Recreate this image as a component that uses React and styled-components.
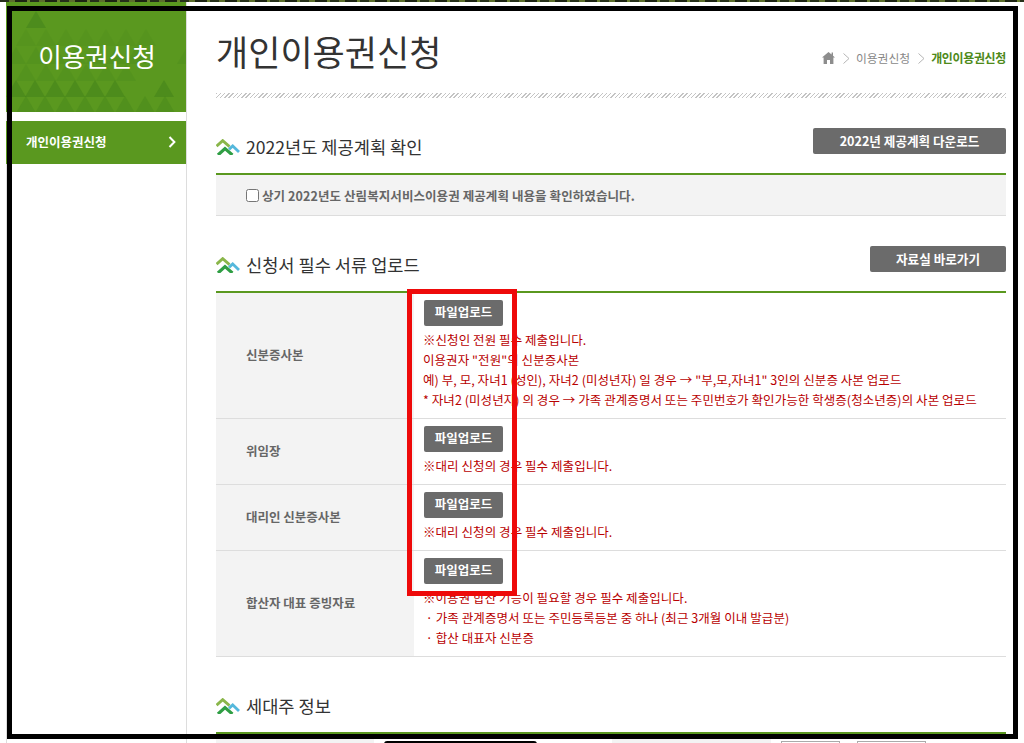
import React from "react";
import styled, { createGlobalStyle } from "styled-components";

const Global = createGlobalStyle`
  html, body { margin: 0; padding: 0; background: #fff; overflow: hidden; }
  #root { width: 1024px; height: 743px; overflow: hidden; }
  * { box-sizing: border-box; }
`;
const Page = styled.div`
  position: relative; width: 1024px; height: 743px; overflow: hidden; background: #fff;
  font-family: "Noto Sans CJK KR", "Noto Sans", sans-serif;
`;
const TopStrip = styled.div`
  height: 2px;
  background: repeating-linear-gradient(90deg, #26301a 0 9px, #5c6f2c 9px 15px, #1d2412 15px 27px, #6a8030 27px 30px);
`;
const Shell = styled.div`display: flex; height: 741px; padding-left: 6px;`;
const Sidebar = styled.aside`
  width: 181px; flex: none; border-right: 1px solid #ddd; height: 100%; box-shadow: inset 1px 0 #ddd;
`;
const SideHead = styled.div`
  height: 110px; background: #5a981f; color: #fff; display: flex; align-items: center; justify-content: center;
  font-size: 25.6px; padding: 0 0 4px 2px; position: relative; overflow: hidden;
  span { position: relative; }
  svg { position: absolute; left: 0; top: 0; }
`;
const SideItem = styled.div`
  margin-top: 9px; height: 43px; background: #5a981f; color: #fff; font-size: 12.5px; font-weight: 700;
  display: flex; align-items: center; justify-content: space-between; padding: 0 10px 2px 20px;
`;
const Main = styled.main`flex: 1; padding: 0 18px 0 29px; min-width: 0;`;
const TitleRow = styled.div`
  height: 91px; display: flex; justify-content: space-between; align-items: flex-start; padding-top: 24px;
`;
const Title = styled.h1`
  margin: 0; font-size: 35px; font-weight: 400; color: #333; line-height: 50px;
`;
const Crumbs = styled.div`
  display: flex; align-items: center; margin-top: 23px; font-size: 11.8px; color: #888; line-height: 18px;
  b { color: #4e8a1a; font-weight: 700; letter-spacing: -0.35px; font-size: 12px; }
  svg { margin-right: 8px; }
  span { margin-right: 8px; }
  svg + span, svg + b { margin-left: -2px; }
`;
const Divider = styled.div`
  height: 5px;
  background: repeating-linear-gradient(135deg, #c4c4c4 0 1px, #fff 1px 3px);
`;
const SectionHead = styled.div`
  display: flex; justify-content: space-between; align-items: flex-start;
  height: ${p => p.$h}px; margin-top: ${p => p.$mt}px;
`;
const HeadLabel = styled.h2`
  margin: 0; display: flex; align-items: center; gap: 6px; font-size: 17.6px; font-weight: 400; color: #333;
  line-height: 24px; padding-top: ${p => p.$pt}px;
`;
const DarkBtn = styled.div`
  background: #6b6b6b; color: #fff; border-radius: 2px; font-weight: 700; font-size: 12.6px;
  display: flex; align-items: center; justify-content: center; width: ${p => p.$w}px; height: 26px;
  flex: none; padding-bottom: 2px;
`;
const ConfirmBox = styled.div`
  border-top: 2px solid #5a981f; border-bottom: 1px solid #ddd; background: #f3f3f3; height: 43px;
  display: flex; align-items: center; padding-left: 30px; gap: 3px; font-size: 12.5px; font-weight: 700; color: #666;
  letter-spacing: 0.08px;
`;
const Check = styled.span`
  width: 13px; height: 13px; border: 1px solid #767676; border-radius: 2.5px; background: #fff; flex: none;
`;
const Table = styled.div`border-top: 2px solid #5a981f;`;
const Row = styled.div`
  display: grid; grid-template-columns: 198px 1fr; border-bottom: 1px solid #ddd; height: ${p => p.$h}px;
`;
const Th = styled.div`
  background: #f3f3f3; color: #666; font-size: 12.5px; font-weight: 700; display: flex; align-items: center;
  padding: 0 0 2px 30px;
`;
const Td = styled.div`padding: 7px 0 0 10px;`;
const Upload = styled.div`
  width: 79px; height: 26px; background: #6b6b6b; color: #fff; border-radius: 2px; font-size: 12.5px; font-weight: 700;
  display: flex; align-items: center; justify-content: center; margin-bottom: 4px; padding-bottom: 3px;
`;
const Note = styled.div`
  color: #b80000; font-size: 12.5px; line-height: 20px; white-space: nowrap; margin-left: -1px; letter-spacing: 0.06px;
`;
const NextRow = styled.div`display: flex; height: 20px;`;
const NextTh = styled.div`background: #f3f3f3; flex: none; width: ${p => p.$w}px;`;
const NextCell = styled.div`
  flex: none; width: ${p => p.$w}px; display: flex; gap: 17px; padding: 7px 0 0 10px;
`;
const Pill = styled.div`width: 153px; height: 20px; background: #000; border-radius: 3px;`;
const Field = styled.div`width: ${p => p.$w}px; height: 20px; border: 1px solid #aaa;`;
const Frame = styled.div`
  position: absolute; left: 7px; top: 6px; width: 1011px; height: 733px; border: 5px solid #000; pointer-events: none;
`;
const RedBox = styled.div`
  position: absolute; left: 407px; top: 289px; width: 110px; height: 307px; border: 5px solid #ee0a0a; pointer-events: none;
`;

const Logo = () => (
  <svg width="24" height="16" viewBox="0 0 24 16">
    <path d="M0.6 7.2 L6.7 1.6 L13.5 7.6" fill="none" stroke="#8ab64a" strokeWidth="2.8" />
    <path d="M13 10.4 L16.7 7 L23 13" fill="none" stroke="#55b8dc" strokeWidth="2.8" />
    <path d="M2 16 L9 9.6 L16.4 16" fill="none" stroke="#2f9e44" strokeWidth="3.2" />
  </svg>
);
const Home = () => (
  <svg width="13" height="12" viewBox="0 0 13 12"><path d="M6.5 0 L9.6 2.6 L9.6 0.6 L11 0.6 L11 3.8 L13 5.6 L11.4 5.6 L11.4 12 L8 12 L8 8 L5 8 L5 12 L1.6 12 L1.6 5.6 L0 5.6 Z" fill="#8d8d8d"/></svg>
);
const Sep = () => (
  <svg width="7" height="11" viewBox="0 0 7 11"><path d="M0.5 0.5 L6 5.5 L0.5 10.5" fill="none" stroke="#b5b5b5" strokeWidth="1"/></svg>
);
const Chev = () => (
  <svg width="8" height="12" viewBox="0 0 8 12"><path d="M1.5 1 L6.4 6 L1.5 11" fill="none" stroke="#fff" strokeWidth="2"/></svg>
);
const row = (y, xs, o) => xs.map(x => [x, y, o]);
const tri = [
  ...row(9, [20], .45),
  ...row(27, [10, 30, 50, 70, 90, 110, 130], .14),
  ...row(45, [0, 20, 40, 60, 80, 100, 120, 171], .18),
  ...row(62, [10, 30, 50, 70, 90, 110], .18),
  ...row(78, [0, 19, 39, 59, 79, 99, 148], .5),
  ...row(94, [10, 29, 49, 69, 89, 109, 129, 149], .32),
];
const Trees = () => (
  <svg width="180" height="110" viewBox="0 0 180 110">
    {tri.map(([x, y, o], i) => (<path key={i} d={`M${x} ${y + 17} L${x + 10} ${y} L${x + 20} ${y + 17} Z`} fill="#3f7f1a" opacity={o} />))}
  </svg>
);

export default function App() {
  return (
    <Page>
      <Global />
      <TopStrip />
      <Shell>
        <Sidebar>
          <SideHead><Trees /><span>이용권신청</span></SideHead>
          <SideItem>개인이용권신청<Chev /></SideItem>
        </Sidebar>
        <Main>
          <TitleRow>
            <Title>개인이용권신청</Title>
            <Crumbs><Home /><Sep /><span>이용권신청</span><Sep /><b>개인이용권신청</b></Crumbs>
          </TitleRow>
          <Divider />
          <SectionHead $mt={30} $h={45}>
            <HeadLabel $pt={7}><Logo />2022년도 제공계획 확인</HeadLabel>
            <DarkBtn $w={193}>2022년 제공계획 다운로드</DarkBtn>
          </SectionHead>
          <ConfirmBox><Check />상기 2022년도 산림복지서비스이용권 제공계획 내용을 확인하였습니다.</ConfirmBox>
          <SectionHead $mt={30} $h={45}>
            <HeadLabel $pt={7}><Logo />신청서 필수 서류 업로드</HeadLabel>
            <DarkBtn $w={136}>자료실 바로가기</DarkBtn>
          </SectionHead>
          <Table>
            <Row $h={126}>
              <Th>신분증사본</Th>
              <Td>
                <Upload>파일업로드</Upload>
                <Note>※신청인 전원 필수 제출입니다.</Note>
                <Note>이용권자 "전원"의 신분증사본</Note>
                <Note>예) 부, 모, 자녀1 (성인), 자녀2 (미성년자) 일 경우 → "부,모,자녀1" 3인의 신분증 사본 업로드</Note>
                <Note>* 자녀2 (미성년자) 의 경우 → 가족 관계증명서 또는 주민번호가 확인가능한 학생증(청소년증)의 사본 업로드</Note>
              </Td>
            </Row>
            <Row $h={66}>
              <Th>위임장</Th>
              <Td><Upload>파일업로드</Upload><Note>※대리 신청의 경우 필수 제출입니다.</Note></Td>
            </Row>
            <Row $h={66}>
              <Th>대리인 신분증사본</Th>
              <Td><Upload>파일업로드</Upload><Note>※대리 신청의 경우 필수 제출입니다.</Note></Td>
            </Row>
            <Row $h={106}>
              <Th>합산자 대표 증빙자료</Th>
              <Td>
                <Upload>파일업로드</Upload>
                <Note>※이용권 합산 기능이 필요할 경우 필수 제출입니다.</Note>
                <Note>&nbsp;· 가족 관계증명서 또는 주민등록등본 중 하나 (최근 3개월 이내 발급분)</Note>
                <Note>&nbsp;· 합산 대표자 신분증</Note>
              </Td>
            </Row>
          </Table>
          <SectionHead $mt={37} $h={38}>
            <HeadLabel $pt={0}><Logo />세대주 정보</HeadLabel>
          </SectionHead>
          <Table>
            <NextRow>
              <NextTh $w={158} />
              <NextCell $w={238}><Pill /></NextCell>
              <NextTh $w={159} />
              <NextCell $w={235}><Field $w={59} /><Field $w={69} /></NextCell>
            </NextRow>
          </Table>
        </Main>
      </Shell>
      <Frame />
      <RedBox />
    </Page>
  );
}
